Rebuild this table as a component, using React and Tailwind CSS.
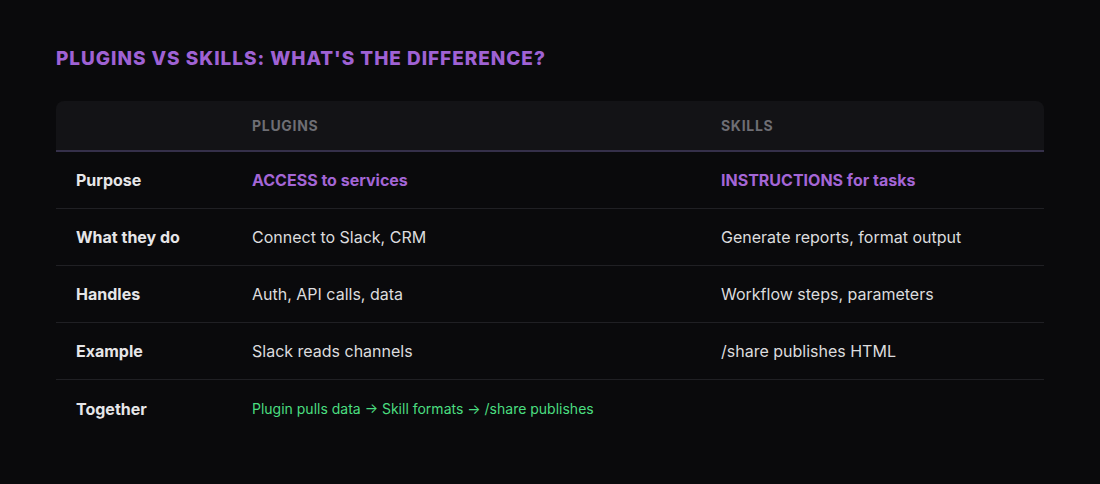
const rows = [
  { label: 'Purpose', plugins: 'ACCESS to services', skills: 'INSTRUCTIONS for tasks', accent: true },
  { label: 'What they do', plugins: 'Connect to Slack, CRM', skills: 'Generate reports, format output' },
  { label: 'Handles', plugins: 'Auth, API calls, data', skills: 'Workflow steps, parameters' },
  { label: 'Example', plugins: 'Slack reads channels', skills: '/share publishes HTML' },
];

export default function App() {
  return (
    <div
      className="min-h-[484px] w-full bg-[#0a0a0c] px-14 pt-[47px]"
      style={{ fontFamily: 'Inter, "Noto Sans", sans-serif' }}
    >
      <h2 className="text-[19px] font-extrabold uppercase tracking-wider text-[#9f62d4] leading-6">
        Plugins vs Skills: What's the difference?
      </h2>

      <div className="mt-[30px] w-[988px]">
        {/* Header */}
        <div className="grid grid-cols-[176px_469px_1fr] h-[51px] items-center rounded-t-lg bg-[#131316] border-b-2 border-[#35304a]">
          <div />
          <div className="px-5 text-[14px] font-bold uppercase tracking-wider text-[#6e6e74]">Plugins</div>
          <div className="px-5 text-[14px] font-bold uppercase tracking-wider text-[#6e6e74]">Skills</div>
        </div>

        {rows.map((r) => (
          <div
            key={r.label}
            className="grid grid-cols-[176px_469px_1fr] h-[57px] items-center border-b border-[#202024]"
          >
            <div className="px-5 text-base font-bold text-[#e6e6e8]">{r.label}</div>
            <div className={r.accent ? 'px-5 text-base font-bold text-[#a466d6]' : 'px-5 text-base text-[#dcdcde]'}>
              {r.plugins}
            </div>
            <div className={r.accent ? 'px-5 text-base font-bold text-[#a466d6]' : 'px-5 text-base text-[#dcdcde]'}>
              {r.skills}
            </div>
          </div>
        ))}

        <div className="grid grid-cols-[176px_1fr] h-[57px] items-center">
          <div className="px-5 text-base font-bold text-[#e6e6e8]">Together</div>
          <div className="px-5 text-sm text-[#4ade80]">
            Plugin pulls data → Skill formats → /share publishes
          </div>
        </div>
      </div>
    </div>
  );
}
